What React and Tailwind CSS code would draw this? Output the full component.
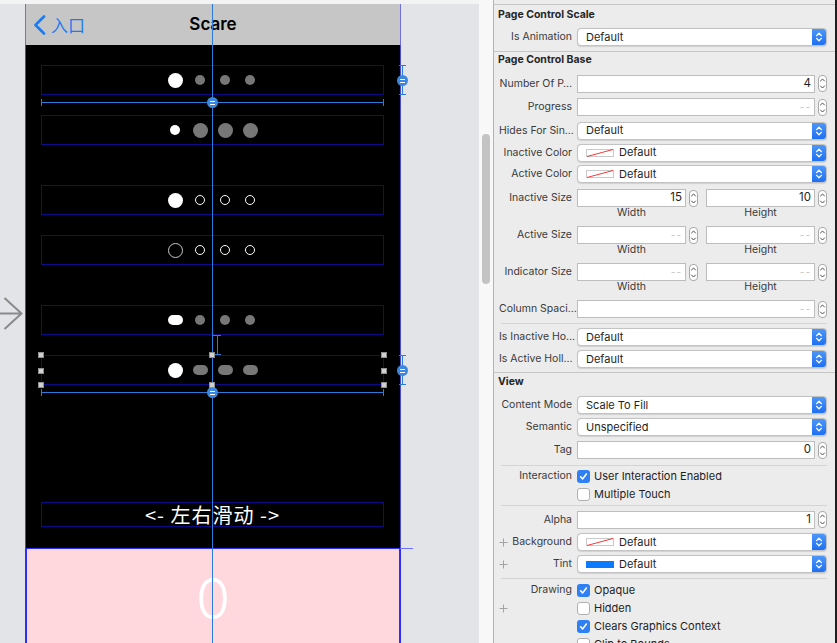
import React from 'react';

const dotClass = {
  w15: 'h-[15px] w-[15px] rounded-full bg-white',
  w10: 'h-[10px] w-[10px] rounded-full bg-white',
  g10: 'h-[10px] w-[10px] rounded-full bg-[#777777]',
  g15: 'h-[15px] w-[15px] rounded-full bg-[#777777]',
  o10: 'h-[10px] w-[10px] rounded-full border border-white',
  o15: 'h-[15px] w-[15px] rounded-full border-[1.5px] border-[#c8c8c8]',
  wp: 'h-[10px] w-[15px] rounded-full bg-white',
  gp: 'h-[10px] w-[15px] rounded-full bg-[#777777]',
};

const rows = [
  { mt: 'mt-[20px]', dots: ['w15', 'g10', 'g10', 'g10'] },
  { mt: 'mt-[20px]', dots: ['w10', 'g15', 'g15', 'g15'] },
  { mt: 'mt-[40px]', dots: ['w15', 'o10', 'o10', 'o10'] },
  { mt: 'mt-[20px]', dots: ['o15', 'o10', 'o10', 'o10'] },
  { mt: 'mt-[40px]', dots: ['wp', 'g10', 'g10', 'g10'] },
  { mt: 'mt-[20px]', dots: ['w15', 'gp', 'gp', 'gp'] },
];

const Handle = ({ className }) => (
  <div className={`absolute flex h-[11px] w-[11px] flex-col items-center justify-center gap-[2px] rounded-full bg-[#3b87e0] ${className}`}>
    <div className="h-[1px] w-[5px] bg-white" />
    <div className="h-[1px] w-[5px] bg-white" />
  </div>
);

const Grip = ({ className }) => (
  <div className={`absolute h-[6px] w-[6px] border border-[#8e8e8e] bg-[#d0d0d0] ${className}`} />
);

const Phone = () => (
  <div className="relative ml-[25px] w-[376px]">
    {/* nav bar */}
    <div className="grid h-[41px] grid-cols-[1fr_auto_1fr] items-center border-x border-[#7070d8] bg-[#c6c6c6]">
      <div className="flex items-center gap-[5px] pl-[7px] text-[#1b7cf0]">
        <svg width="13" height="20" viewBox="0 0 13 20">
          <path d="M11 1.5 2.5 10l8.5 8.5" fill="none" stroke="#1b7cf0" strokeWidth="2.6" strokeLinecap="round" strokeLinejoin="round" />
        </svg>
        <span className="text-[17px] font-['Noto_Sans_CJK_SC',sans-serif] leading-none">入口</span>
      </div>
      <div className="text-[17px] font-semibold text-black">Scare</div>
      <div />
    </div>

    {/* black content */}
    <div className="flex h-[503px] flex-col border-x border-[#4b4bd0] bg-black">
      {rows.map((r, i) => (
        <div key={i} className={`ml-[15px] flex h-[30px] w-[343px] shrink-0 items-center justify-center gap-[10px] border border-[#0c0c8a] ${r.mt}`}>
          {r.dots.map((d, j) => (
            <div key={j} className="flex w-[15px] justify-center">
              <div className={dotClass[d]} />
            </div>
          ))}
        </div>
      ))}
      <div className="ml-[15px] mt-[117px] flex h-[25px] w-[343px] shrink-0 items-center justify-center border border-[#0c0c8a] font-['Noto_Sans_CJK_SC',sans-serif] text-[20px] leading-none tracking-[1px] text-white">
        {'<- 左右滑动 ->'}
      </div>
    </div>

    {/* pink footer */}
    <div className="flex h-[100px] justify-center border-l-2 border-r-2 border-t border-[#2d2dff] bg-[#ffd8dd]">
      <div className="mt-[22px] text-[56px] font-light leading-[56px] text-white">0</div>
    </div>

    {/* overlays */}
    <div className="absolute left-[187px] top-0 bottom-0 w-[1px] bg-[#2a7cd8]" />

    <div className="absolute left-[16px] top-[98px] h-[1px] w-[343px] bg-[#2a7cd8]" />
    <div className="absolute left-[16px] top-[95px] h-[7px] w-[1px] bg-[#2a7cd8]" />
    <div className="absolute left-[358px] top-[95px] h-[7px] w-[1px] bg-[#2a7cd8]" />
    <Handle className="left-[182px] top-[93px]" />

    <div className="absolute left-[16px] top-[388px] h-[1px] w-[343px] bg-[#2a7cd8]" />
    <div className="absolute left-[16px] top-[385px] h-[7px] w-[1px] bg-[#2a7cd8]" />
    <div className="absolute left-[358px] top-[385px] h-[7px] w-[1px] bg-[#2a7cd8]" />
    <Handle className="left-[182px] top-[383px]" />

    <div className="absolute left-[377px] top-[61px] h-[30px] w-[1px] bg-[#2a7cd8]" />
    <div className="absolute left-[374px] top-[61px] h-[1px] w-[7px] bg-[#2a7cd8]" />
    <div className="absolute left-[374px] top-[90px] h-[1px] w-[7px] bg-[#2a7cd8]" />
    <Handle className="left-[372px] top-[71px]" />

    <div className="absolute left-[377px] top-[351px] h-[30px] w-[1px] bg-[#2a7cd8]" />
    <div className="absolute left-[374px] top-[351px] h-[1px] w-[7px] bg-[#2a7cd8]" />
    <div className="absolute left-[374px] top-[380px] h-[1px] w-[7px] bg-[#2a7cd8]" />
    <Handle className="left-[372px] top-[361px]" />

    <div className="absolute left-[192px] top-[331px] h-[20px] w-[1px] bg-[#2a7cd8]" />
    <div className="absolute left-[188px] top-[331px] h-[1px] w-[8px] bg-[#2a7cd8]" />
    <div className="absolute left-[188px] top-[350px] h-[1px] w-[8px] bg-[#2a7cd8]" />

    <Grip className="left-[13px] top-[348px]" />
    <Grip className="left-[184px] top-[348px]" />
    <Grip className="left-[356px] top-[348px]" />
    <Grip className="left-[13px] top-[364px]" />
    <Grip className="left-[356px] top-[364px]" />
    <Grip className="left-[13px] top-[378px]" />
    <Grip className="left-[184px] top-[378px]" />
    <Grip className="left-[356px] top-[378px]" />

    <div className="absolute left-[375px] top-[544px] h-[1px] w-[13px] bg-[#7070ff]" />
  </div>
);

const Canvas = () => (
  <div className="relative w-[479px] shrink-0 bg-[#e3e4e8]">
    <div className="h-[4px] bg-[#f3f3f4]" />
    <Phone />
    <svg className="absolute left-0 top-[296px]" width="24" height="36" viewBox="0 0 24 36">
      <path d="M0 17.5h21.5M4.5 2 21.5 17.5 4.5 33" fill="none" stroke="#8a8a8a" strokeWidth="2" />
    </svg>
  </div>
);

const Chevrons = () => (
  <svg width="14" height="18" viewBox="0 0 14 18">
    <path d="M4.6 7.6 7 5.2l2.4 2.4M4.6 10.4 7 12.8l2.4-2.4" fill="none" stroke="#fff" strokeWidth="1.3" strokeLinecap="round" strokeLinejoin="round" />
  </svg>
);

const Stepper = () => (
  <div className="flex h-[17px] w-[9px] shrink-0 items-center justify-center rounded-[4px] border border-[#a9a9a9] bg-white">
    <svg width="7" height="15" viewBox="0 0 7 15">
      <path d="M1.5 5 3.5 3l2 2M1.5 10l2 2 2-2" fill="none" stroke="#4a4a4a" strokeWidth="1" strokeLinecap="round" strokeLinejoin="round" />
    </svg>
  </div>
);

const NoColor = () => (
  <svg width="28" height="8" viewBox="0 0 28 8" className="shrink-0">
    <rect x="0.5" y="0.5" width="27" height="7" fill="#fff" stroke="#c9c9c9" />
    <path d="M1 7.5 27 0.5" stroke="#f03a3a" strokeWidth="1" />
  </svg>
);

const Popup = ({ children, swatch }) => (
  <div className="flex h-[18px] flex-1 items-center overflow-hidden rounded-[4px] border border-[#c3c3c3] bg-white shadow-[0_0.5px_1px_rgba(0,0,0,0.12)]">
    <div className="flex flex-1 items-center gap-[5px] pl-[8px] text-[11px] text-[#1e1e1e]">
      {swatch === 'none' && <NoColor />}
      {swatch === 'blue' && <div className="h-[7px] w-[28px] shrink-0 bg-[#0a7aff]" />}
      <span>{children}</span>
    </div>
    <div className="flex h-full w-[14px] items-center justify-center bg-gradient-to-b from-[#4c97f8] to-[#1f6ff2]">
      <Chevrons />
    </div>
  </div>
);

const Field = ({ value }) => (
  <div className="flex flex-1 items-center gap-[3px]">
    <div className="flex h-[18px] flex-1 items-center justify-end border border-[#bdbdbd] bg-white pr-[3px] text-[11.5px] text-[#1e1e1e]">
      {value ?? <span className="text-[10px] tracking-[1px] text-[#c4c4c4]">--</span>}
    </div>
    <Stepper />
  </div>
);

const Check = ({ on }) =>
  on ? (
    <div className="flex h-[13px] w-[13px] shrink-0 items-center justify-center rounded-[3px] bg-[#2f7ff5]">
      <svg width="11" height="11" viewBox="0 0 11 11">
        <path d="M2.6 5.8 4.6 8l3.8-5" fill="none" stroke="#fff" strokeWidth="1.6" strokeLinecap="round" strokeLinejoin="round" />
      </svg>
    </div>
  ) : (
    <div className="h-[13px] w-[13px] shrink-0 rounded-[3px] border border-[#b0b0b0] bg-white" />
  );

const Plus = () => (
  <svg width="9" height="9" viewBox="0 0 9 9">
    <path d="M4.5 0.5v8M0.5 4.5h8" stroke="#a3a3a3" strokeWidth="1" />
  </svg>
);

const Row = ({ label, plus, h, children }) => (
  <div className={`flex items-center pl-[4px] pr-[8px] ${h}`}>
    <div className="flex w-[74px] shrink-0 items-center justify-between text-[10.5px] text-[#3a3a3a]">
      <span className="pl-[1px]">{plus ? <Plus /> : null}</span>
      <span className="whitespace-nowrap">{label}</span>
    </div>
    <div className="ml-[5px] flex flex-1 items-center">{children}</div>
  </div>
);

const CheckItem = ({ on, children }) => (
  <div className="flex items-center gap-[4px] text-[11px] text-[#1e1e1e]">
    <Check on={on} />
    <span>{children}</span>
  </div>
);

const SizeRow = ({ label, w, h }) => (
  <div className="pl-[4px] pr-[8px] pt-[3px] pb-[4px]">
    <div className="flex h-[20px] items-center">
      <div className="w-[74px] shrink-0 text-right text-[10.5px] text-[#3a3a3a]">{label}</div>
      <div className="ml-[5px] grid flex-1 grid-cols-2 gap-[8px]">
        <Field value={w} />
        <Field value={h} />
      </div>
    </div>
    <div className="ml-[79px] grid h-[10px] grid-cols-2 gap-[8px] text-[10.5px] leading-[10px] text-[#3a3a3a]">
      <div className="pr-[12px] text-center">Width</div>
      <div className="pr-[12px] text-center">Height</div>
    </div>
  </div>
);

const Header = ({ children, h }) => (
  <div className={`flex items-center pl-[4px] text-[10.5px] font-bold text-[#262626] ${h}`}>{children}</div>
);

const SepFull = () => <div className="h-[1px] bg-[#c6c6c6]" />;
const SepInset = () => <div className="ml-[7px] mr-[8px] h-[1px] bg-[#d4d4d4]" />;

const Inspector = () => (
  <div className="flex-1 overflow-hidden bg-[#ececec]">
    <div className="h-[4px]" />
    <SepFull />
    <Header h="h-[20px]">Page Control Scale</Header>
    <Row label="Is Animation" h="h-[24px]">
      <Popup>Default</Popup>
    </Row>
    <div className="h-[2px]" />
    <SepFull />
    <Header h="h-[20px] pb-[4px]">Page Control Base</Header>
    <Row label="Number Of P…" h="h-[23px]">
      <Field value="4" />
    </Row>
    <Row label="Progress" h="h-[24px]">
      <Field />
    </Row>
    <Row label="Hides For Sin…" h="h-[23px]">
      <Popup>Default</Popup>
    </Row>
    <Row label="Inactive Color" h="h-[21px]">
      <Popup swatch="none">Default</Popup>
    </Row>
    <Row label="Active Color" h="h-[22px]">
      <Popup swatch="none">Default</Popup>
    </Row>
    <SizeRow label="Inactive Size" w="15" h="10" />
    <SizeRow label="Active Size" />
    <SizeRow label="Indicator Size" />
    <Row label="Column Spaci…" h="h-[26px]">
      <Field />
    </Row>
    <div className="h-[1px]" />
    <SepInset />
    <div className="h-[2px]" />
    <Row label="Is Inactive Ho…" h="h-[22px]">
      <Popup>Default</Popup>
    </Row>
    <Row label="Is Active Holl…" h="h-[22px]">
      <Popup>Default</Popup>
    </Row>
    <div className="h-[2px]" />
    <SepFull />
    <Header h="h-[18px]">View</Header>
    <div className="h-[3px]" />
    <Row label="Content Mode" h="h-[22px]">
      <Popup>Scale To Fill</Popup>
    </Row>
    <Row label="Semantic" h="h-[22px]">
      <Popup>Unspecified</Popup>
    </Row>
    <Row label="Tag" h="h-[24px]">
      <Field value="0" />
    </Row>
    <div className="h-[3px]" />
    <SepInset />
    <div className="h-[1px]" />
    <Row label="Interaction" h="h-[18px]">
      <CheckItem on>User Interaction Enabled</CheckItem>
    </Row>
    <Row label="" h="h-[18px]">
      <CheckItem>Multiple Touch</CheckItem>
    </Row>
    <div className="h-[2px]" />
    <SepInset />
    <div className="h-[2px]" />
    <Row label="Alpha" h="h-[23px]">
      <Field value="1" />
    </Row>
    <Row label="Background" plus h="h-[22px]">
      <Popup swatch="none">Default</Popup>
    </Row>
    <Row label="Tint" plus h="h-[22px]">
      <Popup swatch="blue">Default</Popup>
    </Row>
    <div className="h-[3px]" />
    <SepInset />
    <div className="h-[2px]" />
    <Row label="Drawing" h="h-[18px]">
      <CheckItem on>Opaque</CheckItem>
    </Row>
    <Row label="" plus h="h-[18px]">
      <CheckItem>Hidden</CheckItem>
    </Row>
    <Row label="" h="h-[18px]">
      <CheckItem on>Clears Graphics Context</CheckItem>
    </Row>
    <Row label="" h="h-[18px]">
      <CheckItem>Clip to Bounds</CheckItem>
    </Row>
  </div>
);

export default function App() {
  return (
    <div className="flex h-[643px] w-[837px] overflow-hidden bg-[#e3e4e8] font-['Inter',sans-serif]">
      <Canvas />
      <div className="w-[15px] shrink-0 border-r border-[#b3b3b3] bg-[#f8f8f8] pl-[3px] pt-[134px]">
        <div className="h-[150px] w-[8px] rounded-full bg-[#c3c3c3]" />
      </div>
      <Inspector />
      <div className="w-[2px] shrink-0 bg-[#1f1f1f]" />
    </div>
  );
}
